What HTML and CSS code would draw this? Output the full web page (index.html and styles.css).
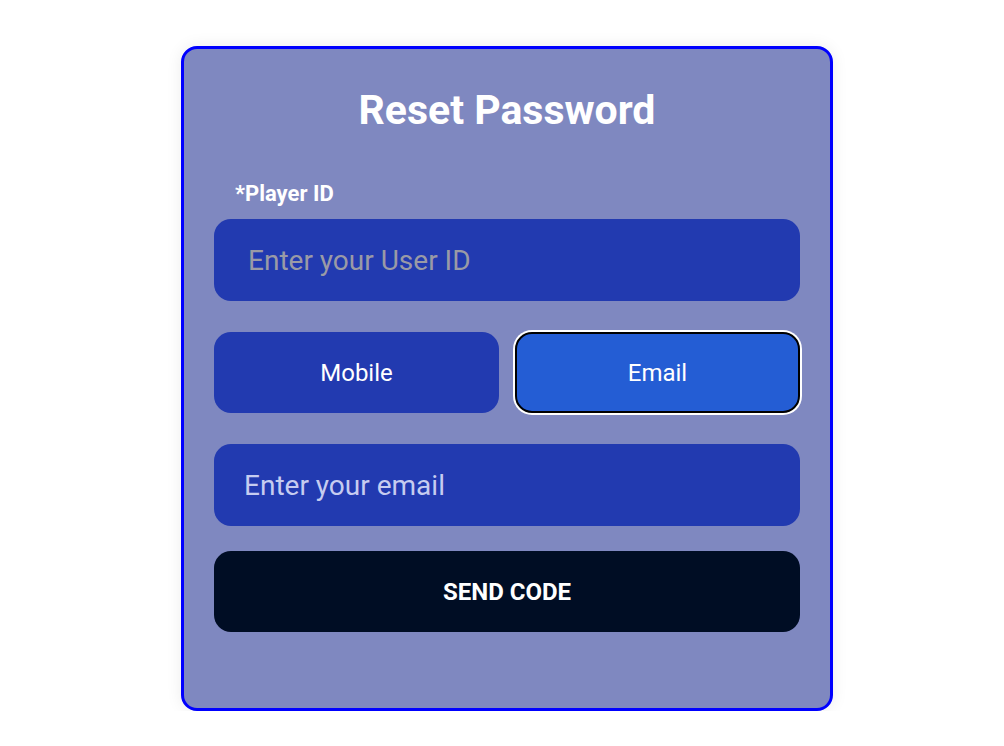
FILE: index.html
```
<!DOCTYPE html>
<html lang="en">
<head>
<meta charset="utf-8">
<title>Reset Password</title>
<link rel="stylesheet" href="styles.css">
</head>
<body>
<div class="page">
  <form class="card">
    <h2 class="title">Reset Password</h2>
    <label class="label">*Player ID</label>
    <div class="field field-id">Enter your User ID</div>
    <div class="toggle">
      <button type="button" class="tab">Mobile</button>
      <button type="button" class="tab tab-active">Email</button>
    </div>
    <div class="field field-email">Enter your email</div>
    <button type="button" class="send">SEND CODE</button>
  </form>
</div>
</body>
</html>
```
FILE: styles.css
```
* { box-sizing: border-box; }
html, body { margin: 0; padding: 0; background: #ffffff; }
body { font-family: Roboto, "Noto Sans", sans-serif; }
.page {
  display: flex;
  justify-content: center;
  padding: 46px 0 0 10px;
}
.card {
  width: 652px;
  height: 665px;
  background: #7f88c0;
  border: 3px solid #0000ff;
  border-radius: 16px;
  box-shadow: 0 0 16px rgba(0,0,0,0.08);
  padding: 37px 30px 30px;
  display: flex;
  flex-direction: column;
}
.title {
  margin: 0;
  text-align: center;
  color: #ffffff;
  font-size: 41px;
  font-weight: 700;
  line-height: 48px;
}
.label {
  margin: 47px 0 0 21px;
  color: #ffffff;
  font-weight: 700;
  font-size: 22px;
  line-height: 26px;
}
.field {
  margin-top: 12px;
  height: 82px;
  border-radius: 17px;
  background: #223ab0;
  display: flex;
  align-items: center;
  font-size: 28px;
}
.field-id { padding-left: 34px; color: #9a9aa6; }
.field-email { padding-left: 30px; color: #c6ccf0; margin-top: 31px; }
.toggle {
  margin-top: 31px;
  display: grid;
  grid-template-columns: 1fr 1fr;
  gap: 16px;
}
.tab {
  height: 81px;
  border: none;
  border-radius: 17px;
  background: #223ab0;
  color: #ffffff;
  font-family: Roboto, "Noto Sans", sans-serif;
  font-size: 24px;
}
.tab-active {
  background: #245dd4;
  border: 2px solid #000000;
  box-shadow: 0 0 0 2px #ffffff;
}
.send {
  margin-top: 25px;
  height: 81px;
  border: none;
  border-radius: 17px;
  background: #000d24;
  color: #ffffff;
  font-family: Roboto, "Noto Sans", sans-serif;
  font-weight: 700;
  font-size: 24px;
}
```
